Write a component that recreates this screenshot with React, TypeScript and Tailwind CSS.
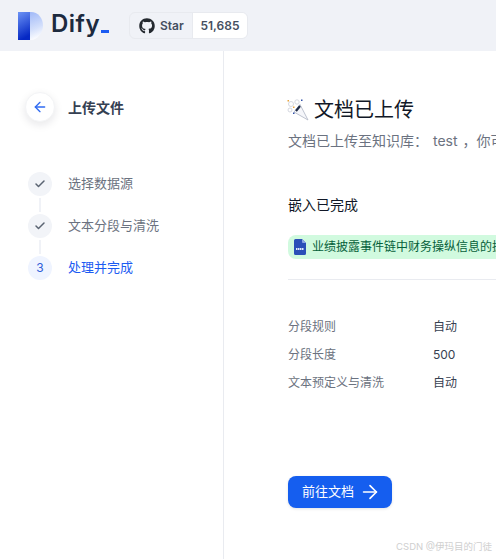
import { ArrowLeft, ArrowRight, Check } from "lucide-react";
import { FaGithub } from "react-icons/fa";

const font = { fontFamily: '"Inter", "Noto Sans CJK SC", sans-serif' };

const Logo = () => (
    <svg width="25" height="28" viewBox="0 0 25 28">
        <defs>
            <linearGradient id="dify-left" x1="0" y1="0" x2="0.25" y2="1">
                <stop offset="0" stopColor="#6c93f5" />
                <stop offset="1" stopColor="#0528c4" />
            </linearGradient>
            <linearGradient id="dify-right" x1="0.2" y1="0" x2="0.4" y2="1">
                <stop offset="0" stopColor="#a3bbf8" />
                <stop offset="0.6" stopColor="#d3dffb" />
                <stop offset="1" stopColor="#ffffff" />
            </linearGradient>
        </defs>
        <path d="M12 0h1c7 0 12 6 12 13.500S19 28 13 28h-1z" fill="url(#dify-right)" />
        <rect width="12" height="28" fill="url(#dify-left)" />
    </svg>
);

const Popper = () => (
    <svg width="22" height="22" viewBox="0 0 22 22" fill="none">
        <path d="M7 13L13 5.500 21 21z" fill="#f5f6fa" stroke="#b7bcc9" strokeWidth="0.9" strokeLinejoin="round" />
        <path d="M9 12l4-5" stroke="#1f2b46" strokeWidth="2.200" />
        <circle cx="4" cy="5" r="2.500" stroke="#d5d8e0" strokeWidth="1" />
        <circle cx="3" cy="11" r="2" stroke="#d5d8e0" strokeWidth="1" />
        <circle cx="10" cy="3" r="2.200" stroke="#d5d8e0" strokeWidth="1" />
        <rect x="0.500" y="1" width="1.500" height="1.500" fill="#e8a33d" />
        <rect x="6" y="7.500" width="1.500" height="1.500" fill="#e8a33d" />
        <rect x="14" y="0.500" width="1.500" height="1.500" fill="#2f4fa8" />
        <rect x="6" y="13.500" width="1.500" height="1.500" fill="#2f4fa8" />
    </svg>
);

const DocxIcon = () => (
    <svg width="12" height="16" viewBox="0 0 12 16">
        <path d="M1.500 0H8l4 4v10.500a1.500 1.500 0 0 1-1.500 1.500h-9A1.500 1.500 0 0 1 0 14.500V1.500A1.500 1.500 0 0 1 1.500 0z" fill="#2b4fb8" />
        <path d="M8 0l4 4H9a1 1 0 0 1-1-1z" fill="#8ea6e6" />
        <path d="M2 10h8" stroke="#dfe7fb" strokeWidth="2" strokeDasharray="1.500 0.500" />
    </svg>
);

const steps = [
    { label: "选择数据源", done: true },
    { label: "文本分段与清洗", done: true },
    { label: "处理并完成", done: false },
];

const rules = [
    { name: "分段规则", value: "自动" },
    { name: "分段长度", value: "500" },
    { name: "文本预定义与清洗", value: "自动" },
];

export default function App() {
    return (
        <div className="relative w-[496px] h-[559px] overflow-hidden bg-white flex flex-col" style={font}>
            {/* Top bar */}
            <header className="h-[51px] shrink-0 bg-[#f0f2f7] flex items-center pl-[18px]">
                <Logo />
                <span className="ml-2 -mt-[3px] w-[49px] text-[24px] leading-none font-semibold tracking-[0.5px] text-[#1c2a3e]">Dify</span>
                <span className="ml-[1px] w-2 h-[3px] bg-[#1c5cf2] mt-[12px]" />
                <div className="ml-5 h-[27px] w-[119px] flex items-center rounded-md border border-[#e8eaef] overflow-hidden text-xs font-semibold text-[#454f60]">
                    <div className="h-full w-[63px] shrink-0 flex items-center pl-[9px] gap-[5px] border-r border-[#e8eaef]">
                        <FaGithub className="text-[#24292f] text-[16px]" />
                        <span>Star</span>
                    </div>
                    <div className="h-full flex-1 bg-white flex items-center justify-center">51,685</div>
                </div>
            </header>

            <div className="flex flex-1 min-h-0">
                {/* Sidebar */}
                <aside className="w-[224px] shrink-0 border-r border-[#e9ebf0] pl-[25px] pt-[41px]">
                    <div className="flex items-center gap-[13px]">
                        <div className="w-[30px] h-[30px] rounded-full bg-white shadow-[0_3px_8px_rgba(16,24,40,0.1)] border border-[#f3f4f6] flex items-center justify-center">
                            <ArrowLeft className="w-4 h-4 text-[#2f6bf2]" strokeWidth={2} />
                        </div>
                        <span className="text-[14px] font-semibold text-[#354052]">上传文件</span>
                    </div>
                    <div className="mt-[50px] pl-[3px]">
                        {steps.map((step, i) => (
                            <div key={step.label}>
                                {i > 0 && <div className="w-0.5 h-[14px] my-[2px] ml-[11px] bg-[#f0f2f7]" />}
                                <div className="flex items-center gap-[16px]">
                                    {step.done ? (
                                        <div className="w-6 h-6 rounded-full bg-[#f2f4f8] flex items-center justify-center">
                                            <Check className="w-3 h-3 text-[#5b6472]" strokeWidth={3} />
                                        </div>
                                    ) : (
                                        <div className="w-6 h-6 rounded-full bg-[#eff4ff] flex items-center justify-center text-xs text-[#2f5fd8]">3</div>
                                    )}
                                    <span className={step.done ? "text-[13px] text-[#6b7280]" : "text-[13px] text-[#1c5cf2]"}>{step.label}</span>
                                </div>
                            </div>
                        ))}
                    </div>
                </aside>

                {/* Main */}
                <main className="flex-1 min-w-0 pl-[64px] pt-[46px] overflow-hidden">
                    <div className="flex items-center gap-[5px] h-[26px] -ml-[1px]">
                        <Popper />
                        <h1 className="text-[20px] leading-[26px] font-normal text-[#111827] whitespace-nowrap">文档已上传</h1>
                    </div>
                    <p className="mt-[8px] text-[14px] leading-5 text-[#6b7280] whitespace-nowrap">文档已上传至知识库： <span className="ml-[1px] mr-[1px]">test</span> ，你可以在知识库的文档列表中找到它。</p>
                    <div className="mt-[44px] text-[14px] leading-5 text-[#111827]">嵌入已完成</div>
                    <div className="mt-[20px] h-6 w-[300px] flex items-center gap-[6px] pl-[6px] rounded-l-lg bg-[#d1fadf]">
                        <DocxIcon />
                        <span className="text-xs text-[#05603a] whitespace-nowrap">业绩披露事件链中财务操纵信息的披露研究.docx</span>
                    </div>
                    <div className="mt-[20px] h-px w-[300px] bg-[#e9ebf0]" />
                    <dl className="mt-[37px] flex flex-col gap-2 text-xs leading-5">
                        {rules.map((rule) => (
                            <div key={rule.name} className="flex">
                                <dt className="w-[145px] text-[#6b7280]">{rule.name}</dt>
                                <dd className="text-[#374151]">{rule.value}</dd>
                            </div>
                        ))}
                    </dl>
                    <button className="mt-[83px] w-[104px] h-8 rounded-lg bg-[#155eef] shadow-[0_1px_3px_rgba(16,24,40,0.12)] flex items-center pl-[14px] gap-[5px] text-[13px] text-white">
                        前往文档
                        <ArrowRight className="w-[22px] h-[22px]" strokeWidth={1.800} />
                    </button>
                </main>
            </div>

            {/* Watermark */}
            <span className="absolute right-[4px] bottom-[6px] text-[9.5px] leading-[12px] text-[#cfcfcf]">CSDN @伊玛目的门徒</span>
        </div>
    );
}
